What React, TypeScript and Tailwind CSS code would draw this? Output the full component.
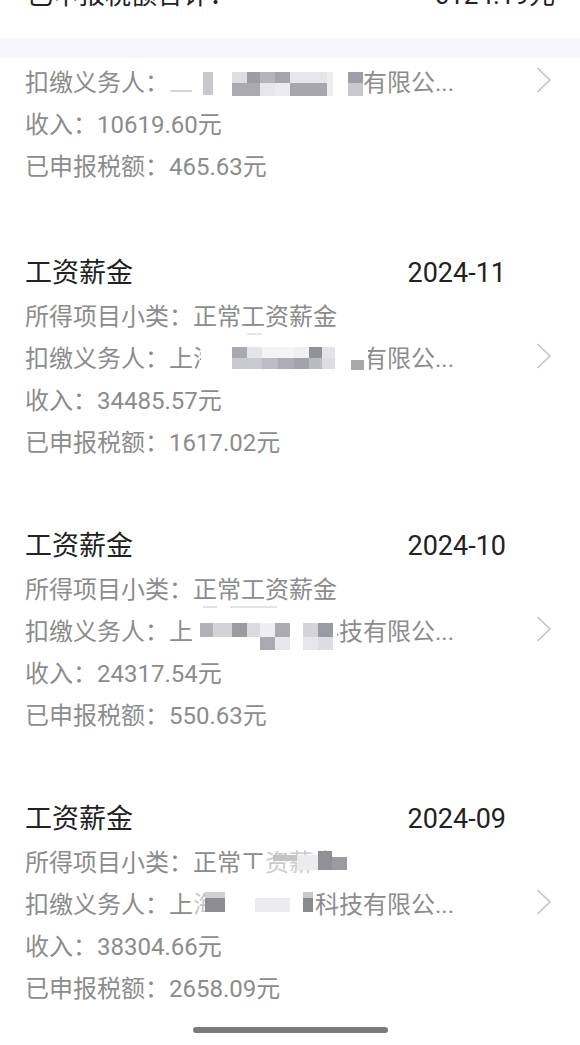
import React from "react";

type Cell = [number, number, number, number, string]; // x1, x2 (page x), y1, y2 (row-relative), color

function Mosaic({ start, width, cells }: { start: number; width: number; cells: Cell[] }) {
  return (
    <span className="relative inline-block h-[42px] align-top" style={{ width }}>
      {cells.map(([x1, x2, y1, y2, c], i) => (
        <span
          key={i}
          className="absolute block"
          style={{ left: x1 - start, width: x2 - x1, top: y1, height: y2 - y1, background: c }}
        />
      ))}
    </span>
  );
}

function Overlay({ start, cells, children }: { start: number; cells: Cell[]; children: React.ReactNode }) {
  return (
    <span className="relative inline-block h-[42px] align-top">
      {children}
      {cells.map(([x1, x2, y1, y2, c], i) => (
        <span
          key={i}
          className="absolute block"
          style={{ left: x1 - start, width: x2 - x1, top: y1, height: y2 - y1, background: c }}
        />
      ))}
    </span>
  );
}

function Chevron() {
  return (
    <svg width="16" height="26" viewBox="0 0 16 26" className="mb-[7px] shrink-0">
      <path d="M2 1.5 L14 13 L2 24.5" fill="none" stroke="#c4c4c4" strokeWidth="1.7" strokeLinecap="round" strokeLinejoin="round" />
    </svg>
  );
}

function Row({ children }: { children: React.ReactNode }) {
  return (
    <div className="h-[42px] leading-[42px] text-[24px] text-[#8c8c8c] whitespace-nowrap">
      <span>{children}</span>
    </div>
  );
}

function PayerRow({ children }: { children: React.ReactNode }) {
  return (
    <div className="h-[42px] leading-[42px] text-[24px] text-[#8c8c8c] whitespace-nowrap flex items-center justify-between pr-[28px]">
      <span className="h-[42px]">{children}</span>
      <Chevron />
    </div>
  );
}

function Title({ date }: { date: string }) {
  return (
    <div className="h-[46px] flex items-center justify-between pr-[74px] text-[27px] leading-[46px] text-[#222222]">
      <span>工资薪金</span>
      <span>{date}</span>
    </div>
  );
}

const card1Cells: Cell[] = [
  [169, 193, 4, 28, "#ffffff"],
  [169, 197, 28, 34, "rgba(255,255,255,0.6)"],
  [203, 213, 10, 33, "#c9c9cd"],
  [232, 247, 10, 21, "#dedee2"],
  [247, 260, 10, 21, "#9c9ca2"],
  [232, 260, 21, 34, "#a9a9af"],
  [260, 275, 10, 21, "#b4b4ba"],
  [260, 275, 21, 34, "#e6e6ea"],
  [275, 290, 10, 21, "#a4a4aa"],
  [275, 290, 21, 34, "#ececf0"],
  [290, 327, 10, 21, "#e6e6ea"],
  [290, 327, 21, 34, "#a6a6ac"],
  [327, 333, 10, 34, "#eeeef0"],
  [348, 363, 10, 21, "#9e9ea6"],
  [348, 363, 21, 34, "#c8c8ce"],
];

const card2Cells: Cell[] = [
  [201, 232, 4, 36, "#ffffff"],
  [232, 247, 9, 20, "#a9a9b1"],
  [232, 247, 20, 31, "#c9c9d1"],
  [247, 262, 9, 20, "#e3e3e8"],
  [247, 262, 20, 31, "#cacad2"],
  [262, 294, 9, 20, "#f4f4f6"],
  [262, 278, 20, 31, "#bcbcc4"],
  [278, 294, 20, 31, "#adadb5"],
  [294, 309, 9, 20, "#f0f0f2"],
  [294, 309, 20, 31, "#a3a3ab"],
  [309, 322, 9, 20, "#92929a"],
  [309, 322, 20, 31, "#babac2"],
  [322, 335, 9, 20, "#e3e3e8"],
  [322, 335, 20, 31, "#dcdce2"],
  [335, 351, 4, 36, "#ffffff"],
  [351, 368, 4, 22, "#ffffff"],
  [351, 364, 22, 32, "#a9a9a9"],
  [364, 368, 22, 36, "#ffffff"],
  [247, 262, -5, -3, "#e6e6ea"],
];

const card3Cells: Cell[] = [
  [315, 337, 4, 40, "#ffffff"],
  [200, 213, 12, 26, "#b1b1b9"],
  [213, 232, 12, 26, "#d2d2d8"],
  [232, 247, 12, 26, "#9a9aa2"],
  [247, 260, 12, 26, "#dadae0"],
  [260, 275, 12, 26, "#eeeef2"],
  [260, 275, 26, 39, "#a9a9b1"],
  [275, 290, 12, 26, "#aaaab0"],
  [275, 290, 26, 39, "#e8e8ec"],
  [303, 318, 12, 26, "#d3d3d9"],
  [303, 318, 26, 39, "#e6e6ea"],
  [318, 333, 12, 26, "#9a9aa2"],
  [318, 333, 26, 39, "#dcdce2"],
  [203, 217, -5, -3, "#e0e0e4"],
  [230, 277, -5, -3, "#e4e4e8"],
];

const card4IncomeCells: Cell[] = [
  [241, 265, 27, 36, "#ffffff"],
  [265, 313, 6, 36, "rgba(255,255,255,0.55)"],
  [313, 337, 19, 36, "#ffffff"],
  [273, 297, 13, 19, "#c4c4c8"],
  [297, 318, 13, 28, "#ececee"],
  [318, 332, 9, 28, "#909096"],
  [332, 347, 15, 28, "#9a9aa0"],
];

const card4PayerCells: Cell[] = [
  [193, 205, 4, 36, "rgba(255,255,255,0.5)"],
  [205, 217, 4, 36, "#ffffff"],
  [205, 225, 8, 14, "#d0d0d4"],
  [205, 225, 14, 28, "#8c8c92"],
  [255, 290, 14, 28, "#ebebef"],
  [303, 313, 8, 14, "#c8c8cc"],
  [303, 313, 14, 28, "#8a8a90"],
];

export default function App() {
  return (
    <div className="w-[580px] h-[1045px] overflow-hidden bg-white font-[Roboto,'Noto_Sans_CJK_SC',sans-serif]">
      {/* header (scrolled, partially visible) */}
      <div className="h-[38px] overflow-hidden">
        <div className="-mt-[18px] flex justify-between pl-[27px] pr-[25px] text-[26px] leading-[26px] text-[#222222] whitespace-nowrap">
          <span>已申报税额合计：</span>
          <span>6124.19元</span>
        </div>
      </div>
      <div className="h-[20px] bg-[#f6f6fb]" />

      {/* card 1 (partially scrolled) */}
      <div className="pt-[4px] pb-[62px] pl-[25px]">
        <PayerRow>
          扣缴义务人：上
          <Mosaic start={193} width={170} cells={card1Cells} />
          有限公...
        </PayerRow>
        <Row>收入：10619.60元</Row>
        <Row>已申报税额：465.63元</Row>
      </div>

      {/* card 2 */}
      <div className="pb-[59px] pl-[25px]">
        <Title date="2024-11" />
        <Row>所得项目小类：正常工资薪金</Row>
        <PayerRow>
          扣缴义务人：上
          <Overlay start={193} cells={card2Cells}>
            海
            <Mosaic start={217} width={146} cells={[]} />
            有
          </Overlay>
          限公...
        </PayerRow>
        <Row>收入：34485.57元</Row>
        <Row>已申报税额：1617.02元</Row>
      </div>

      {/* card 3 */}
      <div className="pb-[59px] pl-[25px]">
        <Title date="2024-10" />
        <Row>所得项目小类：正常工资薪金</Row>
        <PayerRow>
          扣缴义务人：上
          <Overlay start={193} cells={card3Cells}>
            <Mosaic start={193} width={122} cells={[]} />
            科
          </Overlay>
          技有限公...
        </PayerRow>
        <Row>收入：24317.54元</Row>
        <Row>已申报税额：550.63元</Row>
      </div>

      {/* card 4 */}
      <div className="pl-[25px]">
        <Title date="2024-09" />
        <Row>
          所得项目小类：正常
          <Overlay start={241} cells={card4IncomeCells}>工资薪金</Overlay>
        </Row>
        <PayerRow>
          扣缴义务人：上
          <Overlay start={193} cells={card4PayerCells}>
            海
            <Mosaic start={217} width={98} cells={[]} />
          </Overlay>
          科技有限公...
        </PayerRow>
        <Row>收入：38304.66元</Row>
        <Row>已申报税额：2658.09元</Row>
      </div>

      {/* home indicator */}
      <div className="mt-[17px] flex justify-center">
        <div className="h-[6px] w-[195px] rounded-full bg-[#7a7a7a]" />
      </div>
    </div>
  );
}
